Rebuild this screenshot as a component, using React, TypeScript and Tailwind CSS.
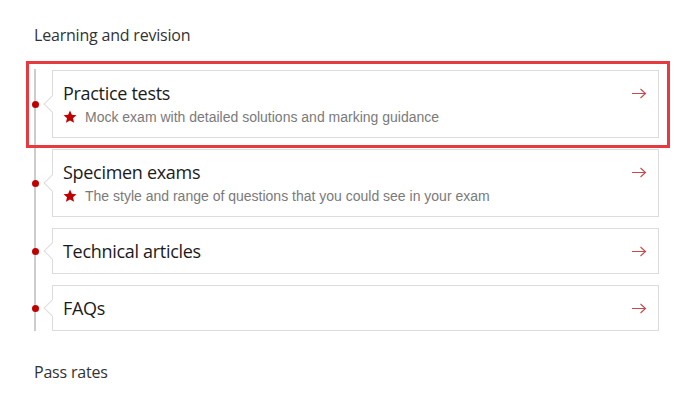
import React from 'react'

type Item = { title: string; note?: string }

const items: Item[] = [
  { title: 'Practice tests', note: 'Mock exam with detailed solutions and marking guidance' },
  { title: 'Specimen exams', note: 'The style and range of questions that you could see in your exam' },
  { title: 'Technical articles' },
  { title: 'FAQs' },
]

const Arrow = () => (
  <svg width="16" height="11" viewBox="0 0 16 11" fill="none" className="shrink-0">
    <path d="M1 5.5H14.5M9.5 1L14.5 5.5L9.5 10" stroke="#c8484b" strokeWidth="1.1" />
  </svg>
)

const Star = () => (
  <svg width="14" height="14" viewBox="0 0 24 24" className="shrink-0">
    <path
      d="M12 1l3.2 7.3 7.9.6-6 5.2 1.9 7.8L12 17.8l-7 4.1 1.9-7.8-6-5.2 7.9-.6z"
      fill="#c00000"
    />
  </svg>
)

const Card = ({ item }: { item: Item }) => (
  <div className="flex items-center">
    <div className="w-[18px] shrink-0 -ml-[2px] flex justify-start">
      <span className="block w-[7px] h-[7px] rounded-full bg-[#c00000] -ml-[2px]" />
    </div>
    <div className="relative w-[607px] border border-[#dcdcdc] bg-white pl-[10px] pr-[11px] pt-[10px] pb-[10px]">
      <span className="absolute -left-[7px] top-1/2 -mt-[6px] w-[12px] h-[12px] rotate-45 bg-white border-l border-b border-[#dcdcdc]" />
      <div className="flex items-center justify-between h-[24px]">
        <span className="text-[18px] leading-[24px] text-[#1b1b1b] font-['Open_Sans',sans-serif] tracking-[-0.3px]">
          {item.title}
        </span>
        <Arrow />
      </div>
      {item.note && (
        <div className="flex items-center gap-[8px] mt-[2px] h-[20px]">
          <Star />
          <span className="text-[14px] leading-[20px] text-[#7a7a7a] font-['Liberation_Sans',Arial,sans-serif]">
            {item.note}
          </span>
        </div>
      )}
    </div>
  </div>
)

export default function App() {
  return (
    <div className="relative w-[697px] h-[413px] bg-white pl-[34px] pt-[24px]">
      <h3 className="text-[16px] leading-[22px] text-[#333] font-['Open_Sans',sans-serif] tracking-[-0.2px]">
        Learning and revision
      </h3>
      <div className="mt-[23px] border-l-2 border-[#cccccc] pt-px flex flex-col gap-[11px] w-fit">
        {items.map((it) => (
          <Card key={it.title} item={it} />
        ))}
      </div>
      <h3 className="mt-[30px] text-[16px] leading-[22px] text-[#333] font-['Open_Sans',sans-serif] tracking-[-0.2px]">
        Pass rates
      </h3>
      <div className="absolute left-[26px] top-[61px] w-[644px] h-[87px] border-[3px] border-[#e8393e] pointer-events-none" />
    </div>
  )
}
